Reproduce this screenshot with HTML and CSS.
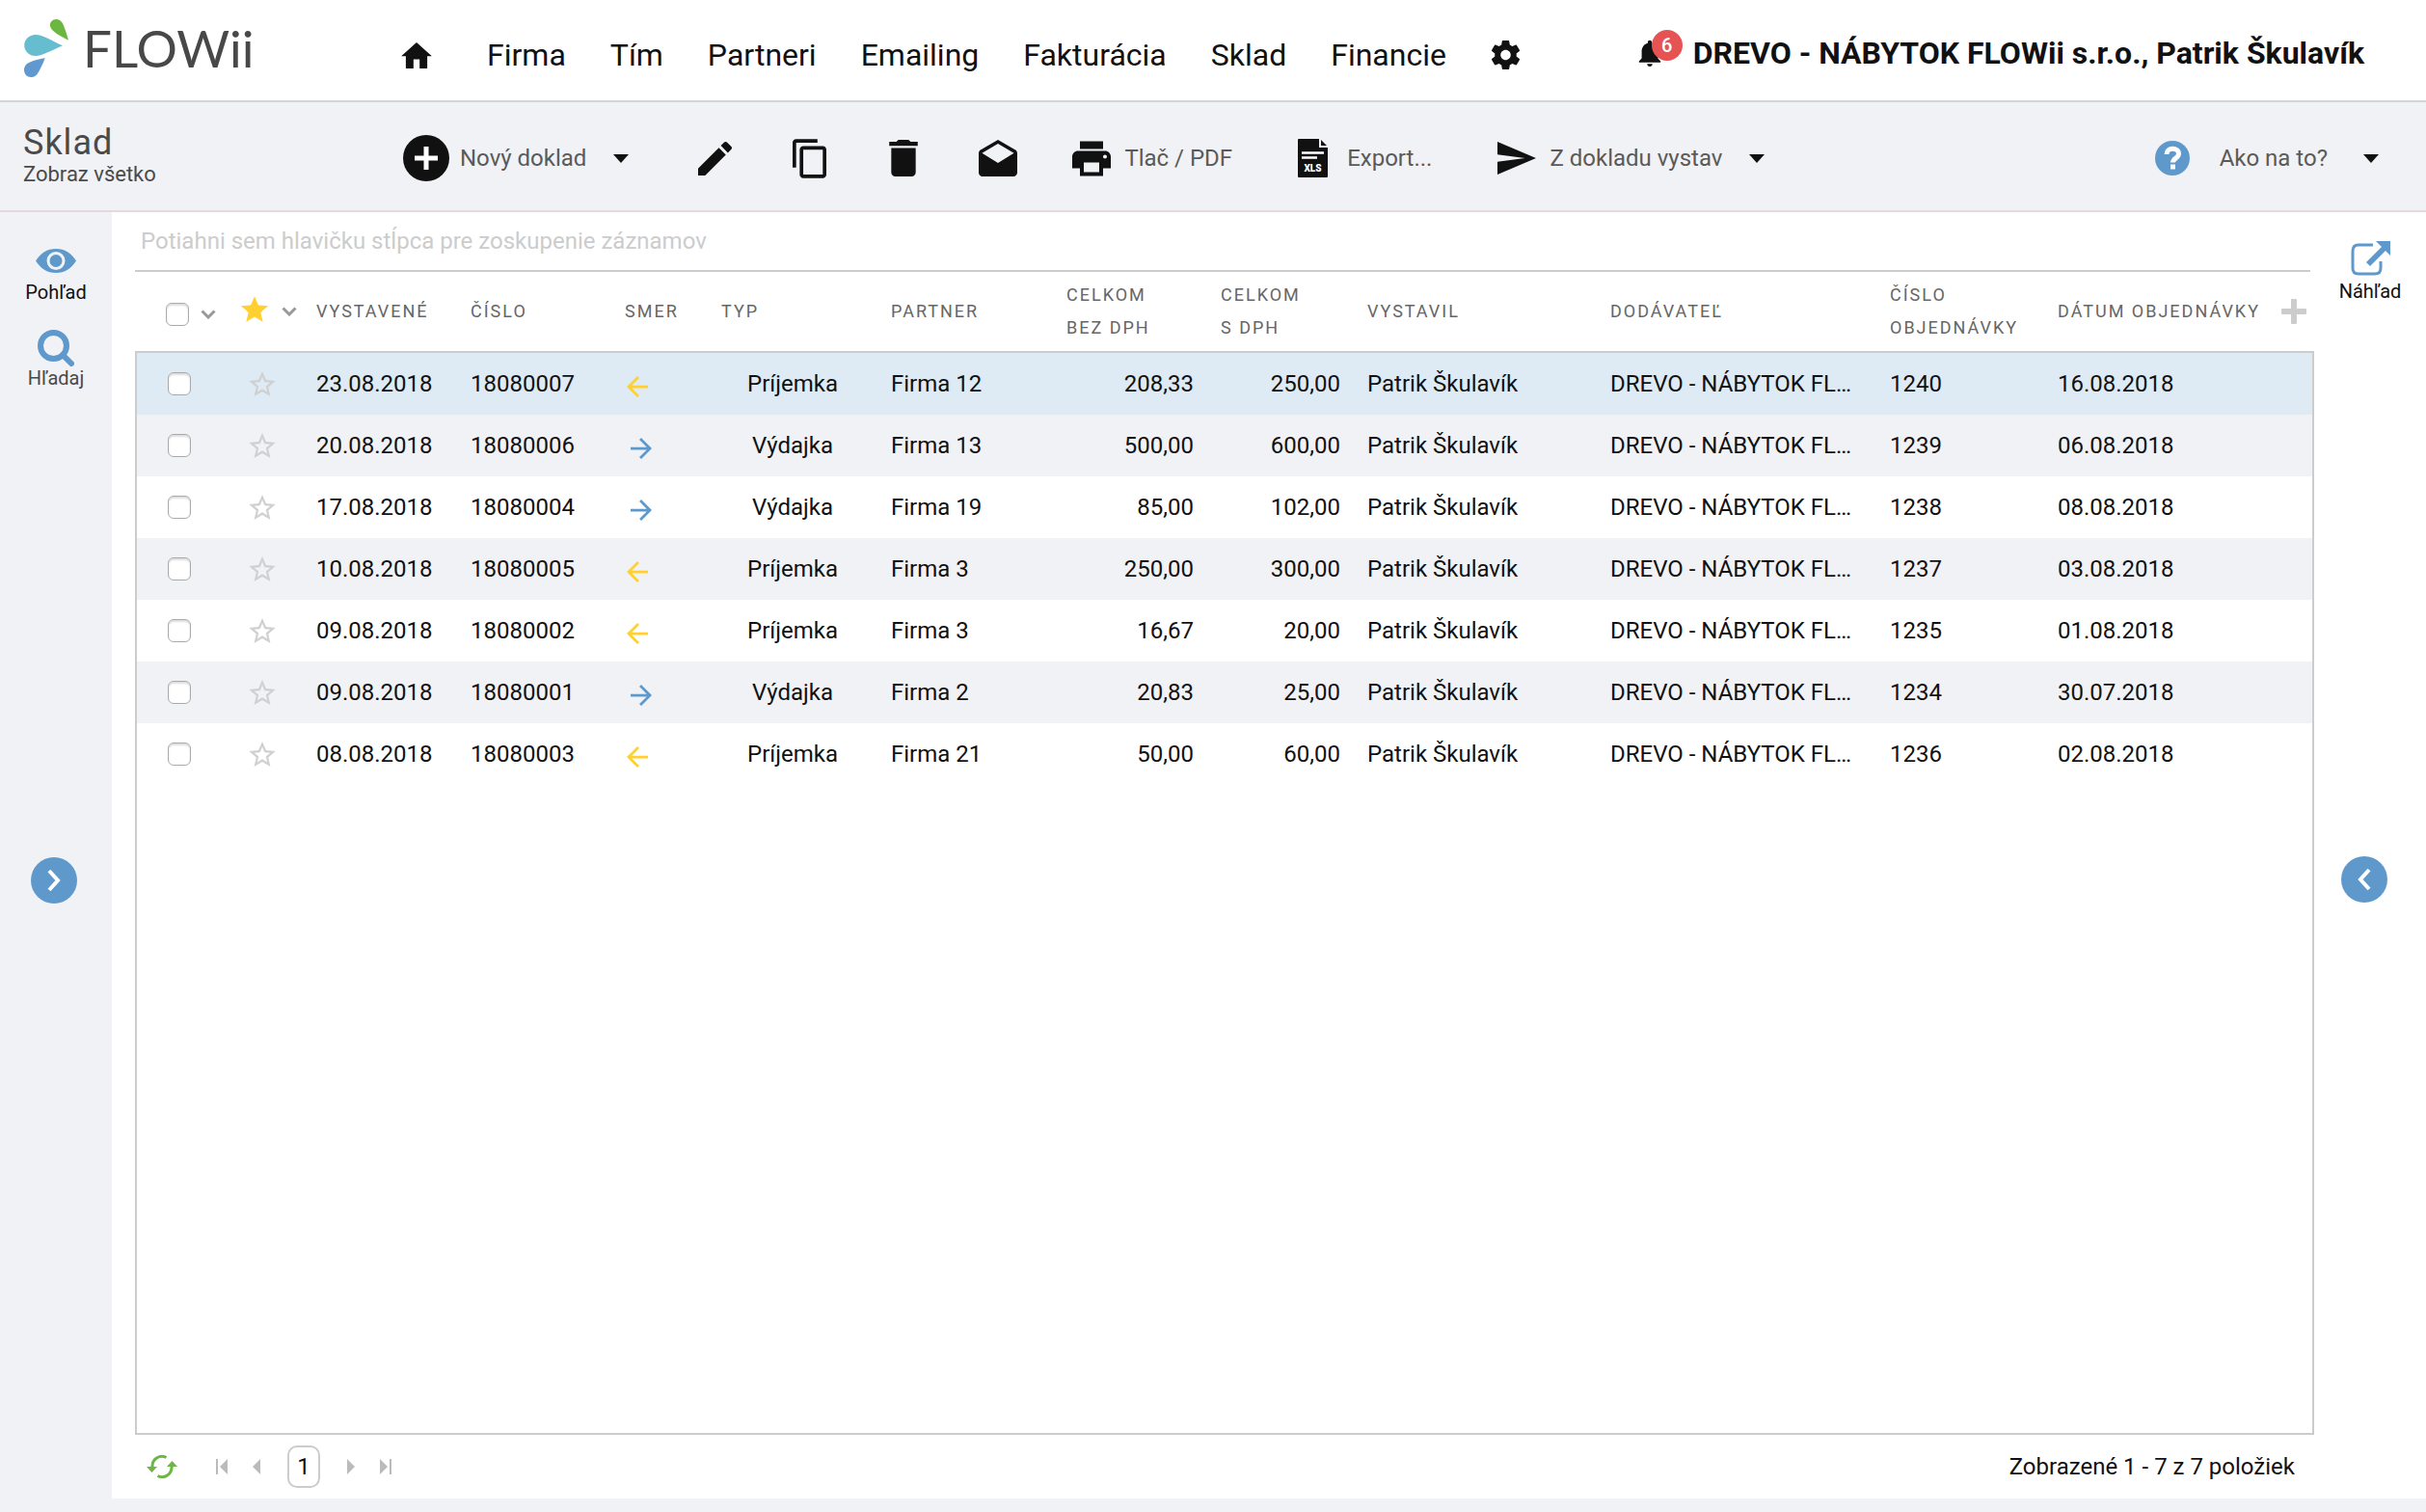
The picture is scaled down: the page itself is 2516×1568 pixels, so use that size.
FILE: index.html
```html
<!DOCTYPE html>
<html lang="sk">
  <head>
    <meta charset="utf-8" />
    <title>Sklad</title>
    <link rel="stylesheet" href="styles.css">
  </head>

  <body>
    <!-- shared icons -->
    <svg class="sprite" aria-hidden="true">
      <symbol id="star-empty" viewBox="2 2 20 19">
        <path d="M22 9.24l-7.19-.62L12 2 9.19 8.63 2 9.24l5.46 4.73L5.82 21 12 17.27 18.18 21l-1.63-7.03L22 9.24zM12 15.4l-3.76 2.27 1-4.28-3.32-2.88 4.38-.38L12 6.1l1.71 4.04 4.38.38-3.32 2.88 1 4.28L12 15.4z" />
      </symbol>
      <symbol id="arrow-left" viewBox="4 4 16 16">
        <path d="M20 11H7.83l5.59-5.59L12 4l-8 8 8 8 1.41-1.41L7.83 13H20v-2z" />
      </symbol>
      <symbol id="arrow-right" viewBox="4 4 16 16">
        <path d="M12 4l-1.41 1.41L16.17 11H4v2h12.17l-5.58 5.59L12 20l8-8z" />
      </symbol>
      <symbol id="caret" viewBox="0 0 16 9">
        <path d="M0 0h16L8 9z" />
      </symbol>
      <symbol id="chevron" viewBox="0 0 16 10">
        <path d="M1.500 1.500L8 8l6.500-6.500" fill="none" stroke="#999" stroke-width="3" />
      </symbol>
    </svg>

    <header class="header">
      <a class="logo" href="#">
        <svg width="48" height="64" viewBox="24 18 48 64">
          <path fill="#6cb742" d="M71 41.700C62 37 53 32.500 52 27c-.7-4 2.500-7 6-7 4 0 6.500 2.500 8 6.500 1.700 4.500 3.500 10 5 15.200z" />
          <path fill="#66bdd0" d="M65 47.300C54 52 44 58 37 58c-7 0-11.800-5-11.800-11S30 36 37 36c7 0 17 6.500 28 11.300z" />
          <path fill="#5f99d0" d="M46.700 60.300C44 67 41.500 73 38.500 77c-2 2.500-4.500 3-6.500 3-4 0-7-3-7-7.500 0-5 4-7.500 9-9.200 4-1.400 8.500-2.300 12.700-3z" />
        </svg>
        <span>FLOWii</span>
      </a>

      <nav class="nav">
        <a class="nav-home" href="#" aria-label="Domov">
          <svg width="32" height="27" viewBox="2 3 20 17"><path d="M10 20v-6h4v6h5v-8h3L12 3 2 12h3v8z" /></svg>
        </a>
        <a href="#">Firma</a>
        <a href="#">Tím</a>
        <a href="#">Partneri</a>
        <a href="#">Emailing</a>
        <a href="#">Fakturácia</a>
        <a href="#">Sklad</a>
        <a href="#">Financie</a>
        <a href="#" aria-label="Nastavenia">
          <svg width="31" height="30" viewBox="2 2 20 20"><path d="M19.430 12.980c.04-.32.07-.64.07-.98s-.03-.66-.07-.98l2.110-1.650c.19-.15.24-.42.12-.64l-2-3.460c-.12-.22-.39-.3-.61-.22l-2.490 1c-.52-.4-1.080-.73-1.690-.98l-.38-2.650C14.460 2.180 14.250 2 14 2h-4c-.25 0-.46.18-.49.42l-.38 2.650c-.61.25-1.170.59-1.690.98l-2.490-1c-.23-.09-.49 0-.61.22l-2 3.460c-.13.22-.07.49.12.64l2.110 1.650c-.04.32-.07.65-.07.98s.03.66.07.98l-2.110 1.650c-.19.15-.24.42-.12.64l2 3.460c.12.22.39.3.61.22l2.490-1c.52.4 1.080.73 1.690.98l.38 2.650c.03.24.24.42.49.42h4c.25 0 .46-.18.49-.42l.38-2.650c.61-.25 1.170-.59 1.690-.98l2.490 1c.23.09.49 0 .61-.22l2-3.460c.12-.22.07-.49-.12-.64l-2.110-1.650zM12 15.500c-1.930 0-3.500-1.570-3.500-3.500s1.570-3.500 3.500-3.500 3.500 1.570 3.500 3.500-1.570 3.500-3.500 3.500z" /></svg>
        </a>
      </nav>

      <div class="account">
        <button class="bell" type="button" aria-label="Upozornenia">
          <svg width="24" height="28" viewBox="4 2 16 20"><path d="M12 22c1.100 0 2-.9 2-2h-4c0 1.100.89 2 2 2zm6-6v-5c0-3.070-1.640-5.640-4.500-6.320V4c0-.83-.67-1.500-1.500-1.500s-1.500.67-1.500 1.500v.68C7.630 5.360 6 7.920 6 11v5l-2 2v1h16v-1l-2-2z" /></svg>
          <span class="badge">6</span>
        </button>
        <a href="#">DREVO - NÁBYTOK FLOWii s.r.o., Patrik Škulavík</a>
      </div>
    </header>

    <div class="toolbar">
      <div class="page-title">
        <h1>Sklad</h1>
        <p>Zobraz všetko</p>
      </div>

      <button class="tool tool-new" type="button">
        <svg width="48" height="48" viewBox="0 0 48 48">
          <circle cx="24" cy="24" r="24" />
          <path d="M12 24h24M24 12v24" stroke="#fff" stroke-width="5" />
        </svg>
        Nový doklad
        <svg class="caret" width="16" height="9"><use href="#caret" /></svg>
      </button>

      <div class="icon-tools">
        <button type="button" aria-label="Upraviť">
          <svg width="35" height="35" viewBox="3 3 18 18"><path d="M3 17.250V21h3.750L17.810 9.940l-3.750-3.750L3 17.250zM20.710 7.040c.39-.39.39-1.020 0-1.410l-2.340-2.340c-.39-.39-1.020-.39-1.410 0l-1.830 1.830 3.750 3.750 1.830-1.830z" /></svg>
        </button>
        <button type="button" aria-label="Kopírovať">
          <svg width="35" height="41" viewBox="2 1 19 22"><path d="M16 1H4c-1.100 0-2 .9-2 2v14h2V3h12V1zm3 4H8c-1.100 0-2 .9-2 2v14c0 1.100.9 2 2 2h11c1.100 0 2-.9 2-2V7c0-1.100-.9-2-2-2zm0 16H8V7h11v14z" /></svg>
        </button>
        <button type="button" aria-label="Vymazať">
          <svg width="30" height="38" viewBox="5 3 14 18"><path d="M6 19c0 1.100.9 2 2 2h8c1.100 0 2-.9 2-2V7H6v12zM19 4h-3.500l-1-1h-5l-1 1H5v2h14V4z" /></svg>
        </button>
        <button type="button" aria-label="Odoslať emailom">
          <svg width="40" height="38" viewBox="2 1 20 19"><path d="M21.990 8c0-.72-.37-1.350-.94-1.700L12 1 2.950 6.300C2.380 6.650 2 7.280 2 8v10c0 1.100.9 2 2 2h16c1.100 0 2-.9 2-2l-.01-10zM12 13L3.740 7.840 12 3l8.260 4.840L12 13z" /></svg>
        </button>
      </div>

      <button class="tool" type="button">
        <svg width="40" height="37" viewBox="2 3 20 18"><path d="M19 8H5c-1.660 0-3 1.340-3 3v6h4v4h12v-4h4v-6c0-1.660-1.340-3-3-3zm-3 11H8v-5h8v5zm3-7c-.55 0-1-.45-1-1s.45-1 1-1 1 .45 1 1-.45 1-1 1zm-1-9H6v4h12V3z" /></svg>
        Tlač / PDF
      </button>

      <button class="tool tool-export" type="button">
        <svg width="31" height="40" viewBox="0 0 31 40">
          <path d="M0 1q0-1 1-1h21v9h9v30q0 1-1 1H1q-1 0-1-1zM24 1l6 6h-6z" />
          <path d="M4 14.500h23M4 19.500h16" stroke="#fff" stroke-width="2.500" />
          <text class="xls" x="15.500" y="34" text-anchor="middle">XLS</text>
        </svg>
        Export...
      </button>

      <button class="tool" type="button">
        <svg width="40" height="34" viewBox="2 3 21 18" preserveAspectRatio="none"><path d="M2.010 21L23 12 2.010 3 2 10l15 2-15 2z" /></svg>
        Z dokladu vystav
        <svg class="caret" width="16" height="9"><use href="#caret" /></svg>
      </button>

      <button class="tool tool-help" type="button">
        <svg width="36" height="36" viewBox="0 0 36 36">
          <circle cx="18" cy="18" r="18" fill="#5f99cc" />
          <path d="M12 14c0-7.500 12.500-7.500 12.500-.5 0 4.500-6 4.500-6 9" fill="none" stroke="#fff" stroke-width="5" />
          <path d="M16 24.500h5v5h-5z" fill="#fff" />
        </svg>
        Ako na to?
        <svg class="caret" width="16" height="9"><use href="#caret" /></svg>
      </button>
    </div>

    <div class="main">
      <aside class="side side-left">
        <div class="side-menu">
          <a href="#">
            <svg width="42" height="25" viewBox="0 0 42 25">
              <path d="M0 12.500C5 4.500 12 0 21 0s16 4.500 21 12.500C37 20.500 30 25 21 25S5 20.500 0 12.500z" fill="#5f99cc" />
              <circle cx="21" cy="12.500" r="8" fill="none" stroke="#f1f2f6" stroke-width="3" />
            </svg>
            Pohľad
          </a>
          <a class="muted" href="#">
            <svg width="38" height="38" viewBox="0 0 38 38">
              <circle cx="16.500" cy="16.500" r="13.500" fill="none" stroke="#5f99cc" stroke-width="6" />
              <path d="M26 26l9 9" stroke="#5f99cc" stroke-width="6" stroke-linecap="round" />
            </svg>
            Hľadaj
          </a>
        </div>
        <button class="toggle" type="button" aria-label="Rozbaliť ľavý panel">
          <svg width="14" height="24" viewBox="0 0 14 24"><path d="M2 2l9 10-9 10" /></svg>
        </button>
      </aside>

      <main class="content">
        <div class="group-bar">Potiahni sem hlavičku stĺpca pre zoskupenie záznamov</div>

        <table class="grid">
          <colgroup>
            <col class="col-check"><col class="col-star"><col class="col-issued"><col class="col-number">
            <col class="col-direction"><col class="col-type"><col class="col-partner"><col class="col-net">
            <col class="col-gross"><col class="col-author"><col class="col-supplier"><col class="col-order"><col>
          </colgroup>
          <thead>
            <tr>
              <th>
                <div class="head-check">
                  <input type="checkbox" aria-label="Vybrať všetko">
                  <svg width="16" height="10"><use href="#chevron" /></svg>
                </div>
              </th>
              <th>
                <div class="head-star">
                  <svg class="star-full" width="28" height="27" viewBox="2 2 20 19"><path d="M12 17.270L18.180 21l-1.640-7.030L22 9.240l-7.190-.61L12 2 9.190 8.630 2 9.240l5.460 4.730L5.820 21z" /></svg>
                  <svg width="16" height="10"><use href="#chevron" /></svg>
                </div>
              </th>
              <th>Vystavené</th>
              <th>Číslo</th>
              <th>Smer</th>
              <th>Typ</th>
              <th>Partner</th>
              <th>Celkom<br>bez DPH</th>
              <th>Celkom<br>s DPH</th>
              <th>Vystavil</th>
              <th>Dodávateľ</th>
              <th>Číslo<br>objednávky</th>
              <th>
                <div class="head-last">
                  Dátum objednávky
                  <button type="button" aria-label="Pridať stĺpec">
                    <svg width="26" height="26" viewBox="0 0 26 26"><path d="M10 1q0-1 1-1h4q1 0 1 1v9h9q1 0 1 1v4q0 1-1 1h-9v9q0 1-1 1h-4q-1 0-1-1v-9H1q-1 0-1-1v-4q0-1 1-1h9z" fill="#ccc" /></svg>
                  </button>
                </div>
              </th>
            </tr>
          </thead>
          <tbody>
            <tr class="selected">
              <td class="check"><input type="checkbox" aria-label="Vybrať 18080007"></td>
              <td class="star"><svg width="28" height="26"><use href="#star-empty" /></svg></td>
              <td>23.08.2018</td>
              <td>18080007</td>
              <td><svg class="in" width="22" height="22"><use href="#arrow-left" /></svg></td>
              <td class="type">Príjemka</td>
              <td>Firma 12</td>
              <td class="num">208,33</td>
              <td class="num">250,00</td>
              <td>Patrik Škulavík</td>
              <td>DREVO - NÁBYTOK FL…</td>
              <td>1240</td>
              <td>16.08.2018</td>
            </tr>
            <tr>
              <td class="check"><input type="checkbox" aria-label="Vybrať 18080006"></td>
              <td class="star"><svg width="28" height="26"><use href="#star-empty" /></svg></td>
              <td>20.08.2018</td>
              <td>18080006</td>
              <td><svg class="out" width="22" height="22"><use href="#arrow-right" /></svg></td>
              <td class="type">Výdajka</td>
              <td>Firma 13</td>
              <td class="num">500,00</td>
              <td class="num">600,00</td>
              <td>Patrik Škulavík</td>
              <td>DREVO - NÁBYTOK FL…</td>
              <td>1239</td>
              <td>06.08.2018</td>
            </tr>
            <tr>
              <td class="check"><input type="checkbox" aria-label="Vybrať 18080004"></td>
              <td class="star"><svg width="28" height="26"><use href="#star-empty" /></svg></td>
              <td>17.08.2018</td>
              <td>18080004</td>
              <td><svg class="out" width="22" height="22"><use href="#arrow-right" /></svg></td>
              <td class="type">Výdajka</td>
              <td>Firma 19</td>
              <td class="num">85,00</td>
              <td class="num">102,00</td>
              <td>Patrik Škulavík</td>
              <td>DREVO - NÁBYTOK FL…</td>
              <td>1238</td>
              <td>08.08.2018</td>
            </tr>
            <tr>
              <td class="check"><input type="checkbox" aria-label="Vybrať 18080005"></td>
              <td class="star"><svg width="28" height="26"><use href="#star-empty" /></svg></td>
              <td>10.08.2018</td>
              <td>18080005</td>
              <td><svg class="in" width="22" height="22"><use href="#arrow-left" /></svg></td>
              <td class="type">Príjemka</td>
              <td>Firma 3</td>
              <td class="num">250,00</td>
              <td class="num">300,00</td>
              <td>Patrik Škulavík</td>
              <td>DREVO - NÁBYTOK FL…</td>
              <td>1237</td>
              <td>03.08.2018</td>
            </tr>
            <tr>
              <td class="check"><input type="checkbox" aria-label="Vybrať 18080002"></td>
              <td class="star"><svg width="28" height="26"><use href="#star-empty" /></svg></td>
              <td>09.08.2018</td>
              <td>18080002</td>
              <td><svg class="in" width="22" height="22"><use href="#arrow-left" /></svg></td>
              <td class="type">Príjemka</td>
              <td>Firma 3</td>
              <td class="num">16,67</td>
              <td class="num">20,00</td>
              <td>Patrik Škulavík</td>
              <td>DREVO - NÁBYTOK FL…</td>
              <td>1235</td>
              <td>01.08.2018</td>
            </tr>
            <tr>
              <td class="check"><input type="checkbox" aria-label="Vybrať 18080001"></td>
              <td class="star"><svg width="28" height="26"><use href="#star-empty" /></svg></td>
              <td>09.08.2018</td>
              <td>18080001</td>
              <td><svg class="out" width="22" height="22"><use href="#arrow-right" /></svg></td>
              <td class="type">Výdajka</td>
              <td>Firma 2</td>
              <td class="num">20,83</td>
              <td class="num">25,00</td>
              <td>Patrik Škulavík</td>
              <td>DREVO - NÁBYTOK FL…</td>
              <td>1234</td>
              <td>30.07.2018</td>
            </tr>
            <tr>
              <td class="check"><input type="checkbox" aria-label="Vybrať 18080003"></td>
              <td class="star"><svg width="28" height="26"><use href="#star-empty" /></svg></td>
              <td>08.08.2018</td>
              <td>18080003</td>
              <td><svg class="in" width="22" height="22"><use href="#arrow-left" /></svg></td>
              <td class="type">Príjemka</td>
              <td>Firma 21</td>
              <td class="num">50,00</td>
              <td class="num">60,00</td>
              <td>Patrik Škulavík</td>
              <td>DREVO - NÁBYTOK FL…</td>
              <td>1236</td>
              <td>02.08.2018</td>
            </tr>
          </tbody>
        </table>
        <div class="grid-rest"></div>

        <footer class="pager">
          <button class="refresh" type="button" aria-label="Obnoviť">
            <svg width="32" height="24" viewBox="0 0 32 24">
              <path d="M20.500 2.500A10 10 0 0 0 6 12M11.500 21.500A10 10 0 0 0 26 12" fill="none" stroke="#6cb742" stroke-width="3" />
              <path d="M0 12h11l-5.500 6zM21 12h11l-5.500-6z" fill="#6cb742" />
            </svg>
          </button>
          <button type="button" aria-label="Prvá strana">
            <svg width="12" height="16" viewBox="0 0 12 16"><path d="M0 0h2v16H0zM12 0v16L4 8z" /></svg>
          </button>
          <button type="button" aria-label="Predchádzajúca strana">
            <svg width="8" height="16" viewBox="0 0 8 16"><path d="M8 0v16L0 8z" /></svg>
          </button>
          <button class="page" type="button">1</button>
          <button type="button" aria-label="Nasledujúca strana">
            <svg width="8" height="16" viewBox="0 0 8 16"><path d="M0 0v16l8-8z" /></svg>
          </button>
          <button type="button" aria-label="Posledná strana">
            <svg width="12" height="16" viewBox="0 0 12 16"><path d="M10 0h2v16h-2zM0 0v16l8-8z" /></svg>
          </button>
          <span class="count">Zobrazené 1 - 7 z 7 položiek</span>
        </footer>
      </main>

      <aside class="side side-right">
        <div class="side-menu">
          <a href="#">
            <svg width="41" height="36" viewBox="0 0 41 36">
              <path d="M23 4H8q-6 0-6 6v18q0 6 6 6h17q6 0 6-6v-7" fill="none" stroke="#5f99cc" stroke-width="3" />
              <path d="M26 0h15v15l-5-5-16 16-4-4L32 6z" fill="#5f99cc" />
            </svg>
            Náhľad
          </a>
        </div>
        <button class="toggle" type="button" aria-label="Rozbaliť pravý panel">
          <svg width="14" height="24" viewBox="0 0 14 24"><path d="M12 2L3 12l9 10" /></svg>
        </button>
      </aside>
    </div>
  </body>
</html>
```
FILE: styles.css
```css
:root {
  --text: #111;
  --muted: #666;
  --blue: #5f99cc;
  --yellow: #ffd02f;
  --line: #ccc;
  --gray-bg: #f1f2f6;
}

* {
  box-sizing: border-box;
}

body {
  display: flex;
  flex-direction: column;
  min-height: 100vh;
  margin: 0;
  font-family: Roboto, 'Liberation Sans', sans-serif;
  font-size: 24px;
  color: var(--text);
  background: #fff;
}

a {
  color: inherit;
  text-decoration: none;
}

button {
  padding: 0;
  border: 0;
  font: inherit;
  color: inherit;
  background: none;
  cursor: pointer;
}

svg {
  display: block;
  flex: none;
  fill: var(--text);
}

.sprite {
  display: none;
}

/* header */
.header {
  display: flex;
  align-items: center;
  height: 106px;
  padding: 10px 64px 0 24px;
  border-bottom: 2px solid #d5d5d5;
}

.logo {
  display: flex;
  align-items: center;
  gap: 14px;
  width: 392px;
  height: 64px;
  margin-bottom: 14px;
  font-family: Lato, sans-serif;
  font-size: 53px;
  line-height: 64px;
  color: #484848;
}

.nav {
  display: flex;
  align-items: center;
  gap: 46px;
  font-size: 32px;
}

.nav-home {
  margin-right: 11px;
}

.account {
  display: flex;
  align-items: center;
  gap: 33px;
  margin-left: auto;
  padding-bottom: 4px;
  font-size: 32px;
  font-weight: 700;
  white-space: nowrap;
}

.bell {
  position: relative;
}

.badge {
  position: absolute;
  top: -10px;
  left: 14px;
  width: 32px;
  height: 32px;
  border-radius: 50%;
  font-size: 20px;
  font-weight: 500;
  line-height: 32px;
  color: #fff;
  background: #e55353;
}

/* toolbar */
.toolbar {
  display: flex;
  align-items: center;
  height: 114px;
  padding: 4px 49px 0 24px;
  border-bottom: 2px solid #e5d9dc;
  background: var(--gray-bg);
}

.page-title {
  width: 394px;
  padding-bottom: 4px;
  color: #4a4a4a;
}

.page-title h1 {
  margin: 0;
  font-size: 36px;
  font-weight: 400;
  line-height: 38px;
  letter-spacing: 1px;
}

.page-title p {
  margin: 0;
  font-size: 22px;
  line-height: 28px;
}

.tool {
  display: flex;
  align-items: center;
  gap: 14px;
  margin-right: 68px;
  color: #5a5a5a;
  white-space: nowrap;
}

.tool .caret {
  margin-left: 14px;
}

.tool-new {
  gap: 11px;
  margin-right: 40px;
}

.tool-new .caret {
  margin-left: 17px;
}

.tool-export {
  gap: 20px;
}

.xls {
  font-size: 10px;
  font-weight: 900;
  fill: #fff;
}

.tool-help {
  gap: 31px;
  margin-right: 0;
  margin-left: auto;
}

.tool-help .caret {
  margin-left: 6px;
}

.icon-tools {
  display: flex;
  align-items: center;
  margin-right: 28px;
}

.icon-tools button {
  display: flex;
  justify-content: center;
  width: 98px;
}

/* side panels */
.main {
  display: flex;
  flex: 1;
}

.side {
  display: grid;
  grid-template-rows: 1fr auto 1fr;
  flex: none;
  justify-items: center;
  width: 116px;
}

.side-left {
  padding-top: 38px;
  background: var(--gray-bg);
}

.side-right {
  padding-top: 30px;
  border-bottom: 14px solid var(--gray-bg);
}

.side-menu {
  display: flex;
  flex-direction: column;
  gap: 27px;
  font-size: 20px;
  line-height: 24px;
}

.side-menu a {
  display: flex;
  flex-direction: column;
  align-items: center;
  gap: 8px;
}

.side-menu .muted {
  gap: 0;
  color: #4a4a4a;
}

.side-right .side-menu a {
  gap: 4px;
}

.toggle {
  display: flex;
  align-items: center;
  justify-content: center;
  width: 48px;
  height: 48px;
  margin-right: 4px;
  border-radius: 50%;
  background: var(--blue);
}

.side-right .toggle {
  margin: 20px 12px 0 0;
}

.toggle path {
  fill: none;
  stroke: #fff;
  stroke-width: 4;
}

/* grid */
.content {
  display: flex;
  flex: 1;
  flex-direction: column;
  min-width: 0;
  padding-left: 24px;
  border-bottom: 14px solid var(--gray-bg);
}

.group-bar {
  height: 62px;
  margin-right: 4px;
  padding-left: 6px;
  border-bottom: 2px solid var(--line);
  line-height: 60px;
  color: #ccc;
}

.grid {
  width: 100%;
  border-collapse: separate;
  border-spacing: 0;
  table-layout: fixed;
}

.col-check { width: 88px; }
.col-star { width: 86px; }
.col-issued { width: 160px; }
.col-number { width: 160px; }
.col-direction { width: 100px; }
.col-type { width: 176px; }
.col-partner { width: 182px; }
.col-net { width: 160px; }
.col-gross { width: 152px; }
.col-author { width: 252px; }
.col-supplier { width: 290px; }
.col-order { width: 174px; }

.grid th {
  height: 84px;
  padding: 0 0 0 14px;
  border-bottom: 2px solid var(--line);
  font-size: 18px;
  font-weight: 400;
  line-height: 34px;
  letter-spacing: 2px;
  text-align: left;
  text-transform: uppercase;
  white-space: nowrap;
  color: var(--muted);
}

.grid th:first-child {
  border-top-left-radius: 4px;
}

.head-check,
.head-star,
.head-last {
  display: flex;
  align-items: center;
}

.head-check {
  gap: 12px;
  padding: 6px 0 0 18px;
}

.head-star {
  gap: 14px;
  padding-left: 8px;
}

.star-full {
  margin-bottom: 6px;
  fill: var(--yellow);
}

.head-last {
  justify-content: space-between;
  padding-right: 8px;
}

.grid td {
  height: 64px;
  padding: 0 14px;
  overflow: hidden;
  text-overflow: ellipsis;
  white-space: nowrap;
}

.grid td:first-child {
  border-left: 2px solid var(--line);
}

.grid td:last-child {
  border-right: 2px solid var(--line);
}

.grid tbody tr:nth-child(even) {
  background: var(--gray-bg);
}

.grid tbody .selected {
  background: #deebf5;
}

.grid .check {
  padding-left: 32px;
}

.grid .star {
  padding-left: 30px;
}

.star svg {
  fill: #d0d0d0;
}

.grid .type {
  text-align: center;
}

.grid .num {
  text-align: right;
}

.in,
.out {
  margin-top: 6px;
}

.in {
  margin-left: 2px;
  fill: var(--yellow);
}

.out {
  margin-left: 6px;
  fill: var(--blue);
}

input[type='checkbox'] {
  display: block;
  width: 24px;
  height: 24px;
  margin: 0;
  border: 1px solid #aaa;
  border-radius: 6px;
  background: #fff;
  box-shadow: inset 0 2px 2px #ddd;
  appearance: none;
}

.grid-rest {
  flex: 1;
  border: 2px solid var(--line);
  border-top: 0;
}

/* pager */
.pager {
  display: flex;
  align-items: center;
  height: 66px;
  padding: 0 20px 0 12px;
}

.pager svg {
  fill: #bbb;
}

.pager button {
  margin-right: 26px;
}

.pager .refresh {
  margin-right: 40px;
}

.pager .page {
  width: 34px;
  height: 44px;
  margin: 0 28px 0 2px;
  border: 2px solid var(--line);
  border-radius: 10px;
}

.count {
  margin-left: auto;
}
```
